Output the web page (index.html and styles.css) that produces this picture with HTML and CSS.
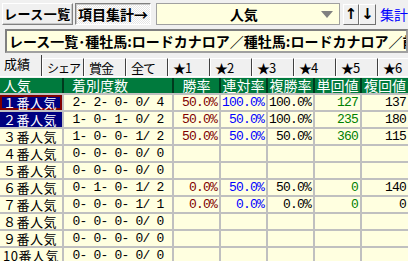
FILE: index.html
```html
<!DOCTYPE html>
<html lang="ja">
  <head>
    <meta charset="UTF-8" />
    <meta name="viewport" content="width=device-width, initial-scale=1.0" />
    <title>項目集計</title>

    <link rel="stylesheet" href="styles.css">
  </head>

  <body>
    <div class="toolbar">
      <button class="tool-button list-button">レース一覧</button>
      <button class="tool-button sum-button pressed">項目集計→</button>
      <div class="combo">
        <span class="combo-text">人気</span>
        <span class="combo-arrow"></span>
      </div>
      <button class="sort-button">↑</button>
      <button class="sort-button">↓</button>
      <span class="link">集計</span>
    </div>

    <div class="title-box">レース一覧･種牡馬:ロードカナロア／種牡馬:ロードカナロア／前走</div>

    <div class="tabs">
      <div class="tab selected">成績</div>
      <div class="tab narrow">シェア</div>
      <div class="tab">賞金</div>
      <div class="tab">全て</div>
      <div class="tab">★1</div>
      <div class="tab">★2</div>
      <div class="tab">★3</div>
      <div class="tab">★4</div>
      <div class="tab">★5</div>
      <div class="tab">★6</div>
    </div>

    <div class="grid head">
      <div class="cell label">人気</div>
      <div class="cell record-head">着別度数</div>
      <div class="cell center">勝率</div>
      <div class="cell center">連対率</div>
      <div class="cell center">複勝率</div>
      <div class="cell center">単回値</div>
      <div class="cell center">複回値</div>
    </div>

    <div class="grid body">
      <div class="cell label sel focus">１番人気</div>
      <div class="cell record">2- 2- 0- 0/ 4</div>
      <div class="cell num win">50.0%</div>
      <div class="cell num ren">100.0%</div>
      <div class="cell num">100.0%</div>
      <div class="cell num tan">127</div>
      <div class="cell num">137</div>

      <div class="cell label sel">２番人気</div>
      <div class="cell record">1- 0- 1- 0/ 2</div>
      <div class="cell num win">50.0%</div>
      <div class="cell num ren">50.0%</div>
      <div class="cell num">100.0%</div>
      <div class="cell num tan">235</div>
      <div class="cell num">180</div>

      <div class="cell label">３番人気</div>
      <div class="cell record">1- 0- 0- 1/ 2</div>
      <div class="cell num win">50.0%</div>
      <div class="cell num ren">50.0%</div>
      <div class="cell num">50.0%</div>
      <div class="cell num tan">360</div>
      <div class="cell num">115</div>

      <div class="cell label">４番人気</div>
      <div class="cell record">0- 0- 0- 0/ 0</div>
      <div class="cell"></div>
      <div class="cell"></div>
      <div class="cell"></div>
      <div class="cell"></div>
      <div class="cell"></div>

      <div class="cell label">５番人気</div>
      <div class="cell record">0- 0- 0- 0/ 0</div>
      <div class="cell"></div>
      <div class="cell"></div>
      <div class="cell"></div>
      <div class="cell"></div>
      <div class="cell"></div>

      <div class="cell label">６番人気</div>
      <div class="cell record">0- 1- 0- 1/ 2</div>
      <div class="cell num win">0.0%</div>
      <div class="cell num ren">50.0%</div>
      <div class="cell num">50.0%</div>
      <div class="cell num tan">0</div>
      <div class="cell num">140</div>

      <div class="cell label">７番人気</div>
      <div class="cell record">0- 0- 0- 1/ 1</div>
      <div class="cell num win">0.0%</div>
      <div class="cell num ren">0.0%</div>
      <div class="cell num">0.0%</div>
      <div class="cell num tan">0</div>
      <div class="cell num">0</div>

      <div class="cell label">８番人気</div>
      <div class="cell record">0- 0- 0- 0/ 0</div>
      <div class="cell"></div>
      <div class="cell"></div>
      <div class="cell"></div>
      <div class="cell"></div>
      <div class="cell"></div>

      <div class="cell label">９番人気</div>
      <div class="cell record">0- 0- 0- 0/ 0</div>
      <div class="cell"></div>
      <div class="cell"></div>
      <div class="cell"></div>
      <div class="cell"></div>
      <div class="cell"></div>

      <div class="cell label">10番人気</div>
      <div class="cell record">0- 0- 0- 0/ 0</div>
      <div class="cell"></div>
      <div class="cell"></div>
      <div class="cell"></div>
      <div class="cell"></div>
      <div class="cell"></div>
    </div>
  </body>
</html>
```

FILE: styles.css
```css
body{
  margin: 0;
  width: 408px;
  height: 261px;
  overflow: hidden;
  background-color: #f0f0f0;
  font-family: "Noto Sans CJK JP", sans-serif;
  color: black;
}

.toolbar{
  display: flex;
  align-items: center;
  height: 28px;
  padding-left: 2px;
}

.tool-button{
  height: 22px;
  padding: 0;
  margin-right: 2px;
  border: 1px solid #a0a0a0;
  border-color: #ffffff #808080 #808080 #ffffff;
  box-shadow: inset -1px -1px 0 #c8c8c8;
  background-color: #f0f0f0;
  font-family: "Noto Sans CJK JP", sans-serif;
  font-size: 13px;
  font-weight: bold;
  line-height: 20px;
  white-space: nowrap;
  color: black;
  cursor: pointer;
}

.list-button{
  width: 72px;
  letter-spacing: 0.5px;
}

.sum-button{
  width: 78px;
  font-size: 14px;
}

.tool-button.pressed{
  border-color: #808080 #ffffff #ffffff #808080;
  box-shadow: inset 1px 1px 0 #c8c8c8;
  background: repeating-conic-gradient(#ffffff 0 25%, #e6e6e6 0 50%) 0 0/2px 2px;
  margin-right: 5px;
}

.combo{
  position: relative;
  width: 185px;
  height: 20px;
  border: 1px solid #a0a0a0;
  background-color: #ffffe0;
  display: flex;
  align-items: center;
  justify-content: center;
  margin-right: 3px;
}

.combo-text{
  font-size: 14px;
  font-weight: bold;
  margin-left: -8px;
}

.combo-arrow{
  position: absolute;
  right: 6px;
  top: 7px;
  border-left: 6px solid transparent;
  border-right: 6px solid transparent;
  border-top: 7px solid #808080;
}

.sort-button{
  width: 17px;
  height: 21px;
  padding: 0;
  border: 1px solid;
  border-color: #ffffff #707070 #707070 #ffffff;
  background-color: #f0f0f0;
  font-family: "DejaVu Sans", sans-serif;
  font-size: 15px;
  font-weight: bold;
  line-height: 18px;
  color: black;
  cursor: pointer;
}

.link{
  margin-left: 4px;
  color: #0000ff;
  font-size: 14px;
  white-space: nowrap;
}

.title-box{
  margin: 1px 0 0 5px;
  height: 20px;
  border: 2px solid;
  border-color: #808080 #a0a0a0 #a0a0a0 #808080;
  background-color: #ffffe0;
  padding-left: 2px;
  font-size: 14px;
  font-weight: bold;
  line-height: 20px;
  white-space: nowrap;
  overflow: hidden;
}

.tabs{
  display: flex;
  align-items: flex-end;
  height: 22px;
  margin-top: 1px;
  border-bottom: 1px solid #ffffff;
  margin-bottom: 1px;
  overflow: hidden;
}

.tab{
  flex-shrink: 0;
  width: 36px;
  height: 17px;
  padding-left: 4px;
  border-top: 1px solid #ffffff;
  border-left: 1px solid #ffffff;
  border-right: 1px solid #404040;
  background-color: #f0f0f0;
  font-size: 13px;
  letter-spacing: -1px;
  line-height: 17px;
  white-space: nowrap;
  overflow: hidden;
}

.tab.narrow{
  font-size: 12px;
  letter-spacing: -1px;
}

.tab.selected{
  width: 37px;
  height: 21px;
  border-top: none;
  border-left: none;
  letter-spacing: 0;
  line-height: 18px;
}

.grid{
  display: grid;
  grid-template-columns: 62px 108px 45px 45px 45px 45px 1fr;
  column-gap: 2px;
  row-gap: 2px;
  grid-auto-rows: 15px;
}

.head{
  background-color: #003a1e;
  color: white;
}

.head .cell{
  background-color: #007a3d;
  font-size: 14px;
}

.body{
  background-color: #c0c0c0;
  padding-top: 2px;
}

.cell{
  background-color: #ffffe0;
  font-size: 13px;
  line-height: 15px;
  white-space: pre;
  overflow: hidden;
}

.label{
  padding-left: 3px;
  letter-spacing: 0.5px;
}

.head .label{
  letter-spacing: 0;
}

.record-head{
  padding-left: 8px;
}

.center{
  text-align: center;
}

.record,
.num{
  font-family: "Liberation Mono", monospace;
  font-size: 13px;
  letter-spacing: -0.8px;
}

.record{
  text-align: center;
}

.num{
  text-align: right;
  padding-right: 2px;
}

.win{
  color: #800000;
}

.ren{
  color: #0000ff;
}

.tan{
  color: #008000;
}

.sel{
  background-color: #000080;
  color: white;
}

.focus{
  box-shadow: inset 0 0 0 2px #800000;
}
```
